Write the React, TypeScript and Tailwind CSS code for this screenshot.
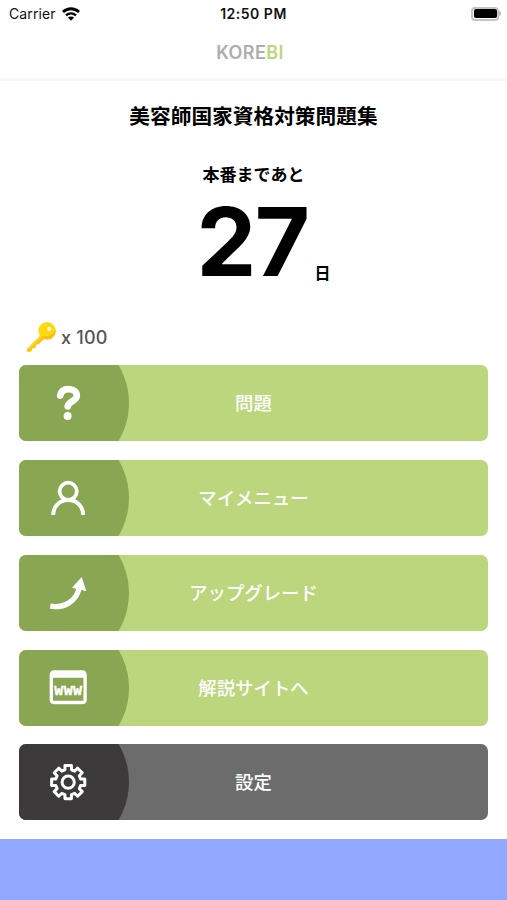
import type { ReactNode } from 'react'
import clsx from 'clsx'

type MenuItem = {
  label: string
  icon: ReactNode
  dark?: boolean
}

// Outline of an 8-toothed cog centred on 24,24
const gearPoints = Array.from({ length: 8 }, (_, i) => {
  const mid = i * 45
  return [
    [mid - 15, 12.8],
    [mid - 11, 16.9],
    [mid + 11, 16.9],
    [mid + 15, 12.8],
  ]
    .map(([deg, r]) => {
      const a = (deg * Math.PI) / 180
      return `${(24.2 + r * Math.sin(a)).toFixed(2)},${(24.2 - r * Math.cos(a)).toFixed(2)}`
    })
    .join(' ')
}).join(' ')

function Icon({ children }: { children: ReactNode }) {
  return (
    <svg viewBox="0 0 48 48" className="size-12 overflow-visible" fill="none" stroke="white">
      {children}
    </svg>
  )
}

const items: MenuItem[] = [
  {
    label: '問題',
    icon: (
      <Icon>
        <path
          d="M16.2 16.6C17 12.4 20 10.2 24.4 10.2C29.4 10.2 32.8 12.8 32.8 16.8C32.8 22.3 24.3 22.4 23.7 27.4"
          strokeWidth="6.7"
          strokeLinecap="round"
        />
        <circle cx="23.6" cy="37.1" r="4" fill="white" stroke="none" />
      </Icon>
    ),
  },
  {
    label: 'マイメニュー',
    icon: (
      <Icon>
        <circle cx="24.2" cy="17.3" r="8.6" strokeWidth="3.8" />
        <path d="M9.2 41C9.2 32.5 15.5 26 24.2 26S39.2 32.5 39.2 41" strokeWidth="4" />
      </Icon>
    ),
  },
  {
    label: 'アップグレード',
    icon: (
      <Icon>
        <path d="M6.3 37.2C20 39.2 32 33 35.2 19" strokeWidth="5.4" />
        <path d="M37.7 8L42.4 22.3L28 18.7Z" fill="white" stroke="none" />
      </Icon>
    ),
  },
  {
    label: '解説サイトへ',
    icon: (
      <Icon>
        <rect x="7.3" y="7.9" width="33.8" height="30.6" rx="2.6" strokeWidth="3.3" />
        <path d="M7 10.8H41.5" strokeWidth="6" />
        <text
          x="24.4"
          y="31"
          fill="white"
          stroke="white"
          strokeWidth="0.4"
          textAnchor="middle"
          className="font-['DejaVu_Sans_Mono',monospace] text-[15px] font-bold tracking-[0.4px]"
        >
          www
        </text>
      </Icon>
    ),
  },
  {
    label: '設定',
    dark: true,
    icon: (
      <Icon>
        <polygon points={gearPoints} strokeWidth="3" strokeLinejoin="round" />
        <circle cx="24.2" cy="24.2" r="6.1" strokeWidth="3" />
      </Icon>
    ),
  },
]

function StatusBar() {
  return (
    <div className="grid h-[27px] grid-cols-[1fr_auto_1fr] items-center pl-[9px] pr-[6px] text-[14px] text-[#111]">
      <div className="flex items-center gap-[6px]">
        <span className="tracking-[0.1px]">Carrier</span>
        <svg viewBox="0 0 18 14" className="h-[14px] w-[18px]" fill="none" stroke="black">
          <path d="M1 5.1C5.6 0.6 12.4 0.6 17 5.1" strokeWidth="2.8" />
          <path d="M4 8.4C7 5.7 11 5.7 14 8.4" strokeWidth="2.4" />
          <path d="M9 13.8L5.9 10.6C7.7 9.1 10.3 9.1 12.1 10.6Z" fill="black" stroke="none" />
        </svg>
      </div>
      <span className="mr-[3px] text-center font-semibold tracking-[0.5px] whitespace-nowrap">12:50 PM</span>
      <div className="flex items-center justify-end">
        <div className="h-[14px] w-[28px] rounded-[4px] border-2 border-[#c4c4c4] p-[0.5px]">
          <div className="h-full rounded-[2px] bg-black" />
        </div>
        <div className="h-[5px] w-[2px] rounded-r-full bg-[#bdbdbd]" />
      </div>
    </div>
  )
}

function KeyIcon() {
  return (
    <svg viewBox="0 0 32 32" className="size-8">
      <path
        d="M17.5 12.5L1.6 28.2L2.2 30.6L5 31L7.2 29.2L7 27.2L9.4 27.4L11.2 25.6L11 23.4L13.4 23.6L21 16Z"
        fill="#fcc419"
      />
      <circle cx="22" cy="9.8" r="8.7" fill="#ffd90f" />
      <path d="M14.4 14A8.7 8.7 0 0 0 30.6 8.5C28 15 20 17 14.4 14Z" fill="#fbbc10" />
      <path d="M17 14L2.6 28.3" stroke="#ffdd2e" strokeWidth="1.6" />
      <circle cx="24.3" cy="7.9" r="2.1" fill="#fff8dc" />
    </svg>
  )
}

function MenuButton({ label, icon, dark }: MenuItem) {
  return (
    <button
      className={clsx(
        'relative flex h-[76px] w-full items-center justify-center overflow-hidden rounded-[7px]',
        dark ? 'bg-[#6c6c6c]' : 'bg-[#bcd67d]',
      )}
    >
      <span
        className={clsx(
          'absolute -left-[38px] -top-[36px] size-[148px] rounded-full',
          dark ? 'bg-[#3d3a3b]' : 'bg-[#89a652]',
        )}
      />
      <span className="absolute left-[25px] top-[14px]">{icon}</span>
      <span className="relative pt-[2px] text-[18.4px] font-medium text-white">{label}</span>
    </button>
  )
}

export default function App() {
  return (
    <div className="flex h-[900px] w-[507px] flex-col overflow-hidden bg-white font-['Inter','Noto_Sans_CJK_JP',sans-serif] text-black">
      <StatusBar />
      <header className="flex h-[54px] items-center justify-center border-b-[3px] border-[#f7f7f7] pr-[7px] text-[18px] font-semibold tracking-[0.4px] text-[#adadad]">
        KORE<span className="text-[#bcd67d]">BI</span>
      </header>

      <main className="flex flex-1 flex-col">
        <h1 className="mt-[21px] text-center text-[20.7px] leading-[30px] font-bold">美容師国家資格対策問題集</h1>
        <p className="mt-[31px] text-center text-[17px] leading-[24px] font-bold">本番まであと</p>
        <div className="-mt-[2px] flex h-[112px] items-baseline justify-center pt-[2px] pl-[20px]">
          <span className="text-[95px] leading-[110px] font-bold tracking-[-1.5px]">27</span>
          <span className="relative top-[3px] ml-[6px] text-[16px] font-bold">日</span>
        </div>

        <div className="mt-[24.3px] flex h-[32px] items-center gap-[4px] pl-[25px]">
          <KeyIcon />
          <span className="text-[18px] font-medium tracking-[0.2px] text-[#555]">x 100</span>
        </div>

        <nav className="mt-[12px] flex flex-col gap-[18.75px] px-[19px]">
          {items.map(item => (
            <MenuButton key={item.label} {...item} />
          ))}
        </nav>
      </main>

      <footer className="h-[61px] bg-[#92a7ff]" />
    </div>
  )
}
